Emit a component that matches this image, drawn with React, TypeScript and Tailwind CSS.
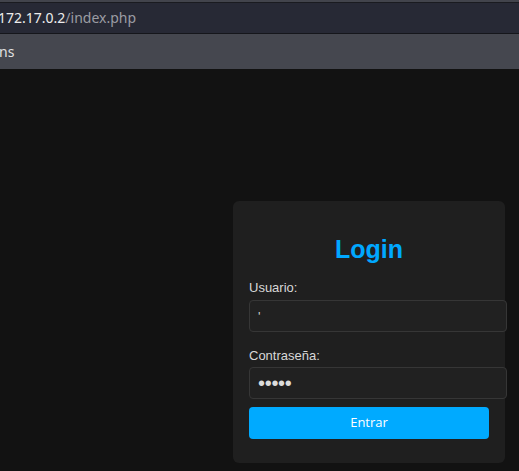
export default function App() {
  return (
    <div className="w-[519px] h-[471px] overflow-hidden bg-[#121212] flex flex-col">
      {/* barra del navegador */}
      <div className="h-[2px] bg-[#42444c]" />
      <div className="h-px bg-[#1a1b20]" />
      <div className="h-[30px] bg-[#272935] flex items-center pl-0 font-['Noto_Sans',sans-serif] text-[14px] leading-none">
        <span className="-ml-[2px] text-[#ececec]">172.17.0.2</span>
        <span className="text-[#9b9ca3]">/index.php</span>
      </div>
      <div className="h-px bg-[#15161b]" />
      <div className="h-[35px] bg-[#45474f] flex items-center font-['Noto_Sans',sans-serif] text-[14px] text-[#e0e0e0]">
        <span className="-ml-[1px]">ns</span>
      </div>

      {/* página */}
      <div className="flex-1 pl-[233px] pt-[132px] font-['Liberation_Sans',Arial,sans-serif]">
        <form className="w-[272px] bg-[#1f1f1f] rounded-md px-4 pb-4 pt-4">
          <h2 className="mt-[17px] h-[30px] leading-[30px] text-center text-[25px] font-bold text-[#00a8ff]">
            Login
          </h2>
          <label className="block mt-4 h-4 leading-4 text-[13px] text-[#d8d8d8]">Usuario:</label>
          <input
            readOnly
            type="text"
            value="'"
            className="block mt-1 w-[258px] h-8 px-2 bg-[#212121] border border-[#363636] rounded text-[13px] text-[#cfcfcf] outline-none"
          />
          <label className="block mt-4 h-4 leading-4 text-[13px] text-[#d8d8d8]">Contraseña:</label>
          <input
            readOnly
            type="password"
            value="admin"
            className="block mt-[3px] w-[258px] h-8 px-2 bg-[#212121] border border-[#363636] rounded text-[20px] tracking-[-0.3px] text-[#dcdcdc] outline-none"
          />
          <button
            type="button"
            className="block mt-2 mb-2 w-[240px] h-8 bg-[#00aaff] rounded text-[13px] text-white font-['Open_Sans',sans-serif]"
          >
            Entrar
          </button>
        </form>
      </div>
    </div>
  );
}
